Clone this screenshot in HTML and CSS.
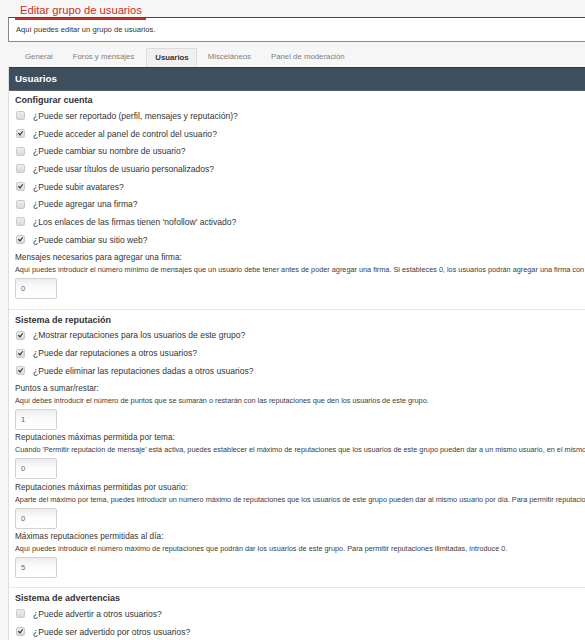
FILE: index.html
```html
<!DOCTYPE html>
<html lang="es">
<head>
    <meta charset="UTF-8">
    <title>Editar grupo de usuarios</title>
    <link rel="stylesheet" href="styles.css">
</head>
<body>
    <div class="page-head">
        <h1 class="page-title">Editar grupo de usuarios</h1>
    </div>
    <div class="intro-box">Aquí puedes editar un grupo de usuarios.</div>

    <ul class="tabs">
        <li class="tab">General</li>
        <li class="tab">Foros y mensajes</li>
        <li class="tab tab-active">Usuarios</li>
        <li class="tab">Misceláneos</li>
        <li class="tab">Panel de moderación</li>
    </ul>

    <div class="panel">
        <div class="panel-head">Usuarios</div>

        <div class="section">
            <h3 class="section-title">Configurar cuenta</h3>
            <div class="check-row"><span class="cb"></span>¿Puede ser reportado (perfil, mensajes y reputación)?</div>
            <div class="check-row"><span class="cb checked"></span>¿Puede acceder al panel de control del usuario?</div>
            <div class="check-row"><span class="cb"></span>¿Puede cambiar su nombre de usuario?</div>
            <div class="check-row"><span class="cb"></span>¿Puede usar títulos de usuario personalizados?</div>
            <div class="check-row"><span class="cb checked"></span>¿Puede subir avatares?</div>
            <div class="check-row"><span class="cb"></span>¿Puede agregar una firma?</div>
            <div class="check-row"><span class="cb"></span>¿Los enlaces de las firmas tienen 'nofollow' activado?</div>
            <div class="check-row"><span class="cb checked"></span>¿Puede cambiar su sitio web?</div>

            <div class="field">
                <div class="field-label">Mensajes necesarios para agregar una firma:</div>
                <div class="field-desc">Aquí puedes introducir el número mínimo de mensajes que un usuario debe tener antes de poder agregar una firma. Si estableces 0, los usuarios podrán agregar una firma con cualquier número de mensajes.</div>
                <div class="field-input">0</div>
            </div>
        </div>

        <div class="section">
            <h3 class="section-title">Sistema de reputación</h3>
            <div class="check-row"><span class="cb checked"></span>¿Mostrar reputaciones para los usuarios de este grupo?</div>
            <div class="check-row"><span class="cb checked"></span>¿Puede dar reputaciones a otros usuarios?</div>
            <div class="check-row"><span class="cb checked"></span>¿Puede eliminar las reputaciones dadas a otros usuarios?</div>

            <div class="field">
                <div class="field-label">Puntos a sumar/restar:</div>
                <div class="field-desc">Aquí debes introducir el número de puntos que se sumarán o restarán con las reputaciones que den los usuarios de este grupo.</div>
                <div class="field-input">1</div>
            </div>
            <div class="field">
                <div class="field-label">Reputaciones máximas permitida por tema:</div>
                <div class="field-desc">Cuando 'Permitir reputación de mensaje' está activa, puedes establecer el máximo de reputaciones que los usuarios de este grupo pueden dar a un mismo usuario, en el mismo tema, por día.</div>
                <div class="field-input">0</div>
            </div>
            <div class="field">
                <div class="field-label">Reputaciones máximas permitidas por usuario:</div>
                <div class="field-desc">Aparte del máximo por tema, puedes introducir un número máximo de reputaciones que los usuarios de este grupo pueden dar al mismo usuario por día. Para permitir reputaciones ilimitadas, introduce 0.</div>
                <div class="field-input">0</div>
            </div>
            <div class="field">
                <div class="field-label">Máximas reputaciones permitidas al día:</div>
                <div class="field-desc">Aquí puedes introducir el número máximo de reputaciones que podrán dar los usuarios de este grupo. Para permitir reputaciones ilimitadas, introduce 0.</div>
                <div class="field-input">5</div>
            </div>
        </div>

        <div class="section">
            <h3 class="section-title">Sistema de advertencias</h3>
            <div class="check-row"><span class="cb"></span>¿Puede advertir a otros usuarios?</div>
            <div class="check-row"><span class="cb checked"></span>¿Puede ser advertido por otros usuarios?</div>
        </div>
    </div>
</body>
</html>
```

FILE: styles.css
```css
* {
    margin: 0;
    padding: 0;
    box-sizing: border-box;
}

html, body {
    overflow: hidden;
}

body {
    font-family: "Liberation Sans", Arial, sans-serif;
    color: #333;
    background-color: #f6f6f6;
    width: 585px;
    height: 640px;
}

.page-head {
    height: 18px;
    padding-left: 15px;
}

.page-title {
    display: inline-block;
    font-size: 11.2px;
    font-weight: normal;
    color: #c2322a;
    line-height: 16px;
    padding: 0 4px 0 5px;
    border-bottom: 2px solid #c2322a;
    position: relative;
    z-index: 1;
}

.intro-box {
    margin: -1px 0 0 8px;
    width: 600px;
    height: 25px;
    background-color: #fff;
    border: 1px solid #8a8a8a;
    border-top: 1px solid #4a4a4a;
    font-size: 7.6px;
    line-height: 23px;
    padding-left: 7px;
}

.tabs {
    list-style: none;
    display: flex;
    padding-left: 15px;
    margin-top: 5px;
    height: 20px;
}

.tab {
    padding: 0 10px;
    font-size: 7.8px;
    line-height: 20px;
    color: #808080;
}

.tab-active {
    color: #333;
    font-weight: bold;
    background-color: #f0f0f0;
    border: 1px solid #dcdcdc;
    border-bottom: none;
    border-radius: 2px 2px 0 0;
    line-height: 18px;
    padding: 0 7px 0 8px;
    margin: 1px 1px 0 2px;
}

.panel {
    margin-left: 8px;
    width: 600px;
    background-color: #fff;
    border-left: 1px solid #dedede;
}

.panel-head {
    height: 24px;
    background-color: #3f4e5d;
    border-top: 1px solid #2f3b47;
    border-bottom: 1px solid #55636f;
    color: #fff;
    font-weight: bold;
    font-size: 9.8px;
    line-height: 22px;
    padding-left: 6px;
}

.section {
    padding: 3px 0 10px 6px;
    border-bottom: 1px solid #e6e6e6;
}

.section + .section {
    padding-top: 4px;
    padding-bottom: 9px;
}

.section-title {
    font-size: 9px;
    font-weight: bold;
    line-height: 13px;
    color: #333;
}

.check-row {
    display: flex;
    align-items: center;
    height: 17.7px;
    font-size: 8.55px;
    white-space: nowrap;
}

.cb {
    flex: none;
    width: 9px;
    height: 9px;
    margin: 0 8px 0 1px;
    border: 1px solid #cacaca;
    border-radius: 2px;
    background: linear-gradient(#eeeeee, #d8d8d8);
    position: relative;
}

.cb.checked::after {
    content: "";
    position: absolute;
    left: 2px;
    top: 0px;
    width: 2px;
    height: 4px;
    border-right: 1.6px solid #2b2b2b;
    border-bottom: 1.6px solid #2b2b2b;
    transform: rotate(40deg);
}

.field {
    margin-top: 2px;
}

.field + .field {
    margin-top: 1.5px;
}

.field-label {
    font-size: 8.2px;
    line-height: 13px;
    letter-spacing: 0.05px;
}

.field-desc {
    font-size: 7.3px;
    line-height: 11px;
    color: #3c3c3c;
    white-space: nowrap;
}

.field-input {
    margin-top: 3px;
    width: 42px;
    height: 21px;
    border: 1px solid #d2d2d2;
    border-radius: 2px;
    background: linear-gradient(#ececec, #fbfbfb 45%, #fff);
    font-size: 7.5px;
    line-height: 19px;
    color: #666;
    padding-left: 5px;
}
```
